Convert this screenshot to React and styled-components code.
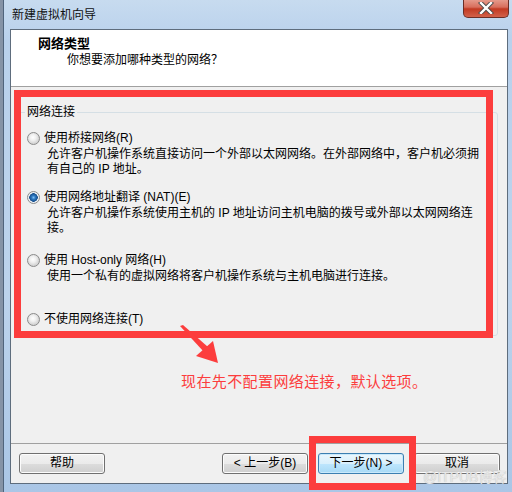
import React from 'react'
import styled, { createGlobalStyle } from 'styled-components'

const GlobalStyle = createGlobalStyle`
  html, body {
    margin: 0;
    padding: 0;
  }
  body {
    font-family: "Liberation Sans", "Noto Sans CJK SC", sans-serif;
    font-size: 12px;
    color: #000;
  }
`

const Page = styled.div`
  width: 512px;
  height: 492px;
  overflow: hidden;
  background: #8593a6;
  display: flex;
`

const Window = styled.div`
  margin-left: 3px;
  width: 515px;
  height: 492px;
  flex-shrink: 0;
  box-sizing: border-box;
  border-left: 1px solid #50647c;
  padding: 0 0 0 6px;
  background: linear-gradient(180deg, #c7dbef 0%, #b9d1ec 8%, #bcd3ec 60%, #aac6e6 100%);
  display: flex;
  flex-direction: column;
`

const TitleBar = styled.div`
  height: 29px;
  display: flex;
  align-items: flex-start;
  position: relative;
`

const TitleText = styled.div`
  margin-top: 7px;
  margin-left: 2px;
  font-size: 12px;
  line-height: 16px;
  color: #111;
`

const CloseButton = styled.div`
  position: absolute;
  left: 453px;
  top: -1px;
  width: 46px;
  height: 19px;
  box-sizing: border-box;
  border: 1px solid #6b2e26;
  border-top: none;
  border-radius: 0 0 5px 5px;
  background: linear-gradient(180deg, #e7a091 0%, #d86f5d 45%, #c23a22 55%, #d2614a 100%);
  display: flex;
  align-items: center;
  justify-content: center;
`

const Client = styled.div`
  width: 498px;
  height: 455px;
  box-sizing: border-box;
  border: 1px solid #5e6d7d;
  background: #f0f0f0;
  display: flex;
  flex-direction: column;
`

const Header = styled.div`
  background: #fff;
  border-bottom: 1px solid #a0a0a0;
  padding: 6px 0 0 27px;
  height: 50px;
`

const HeaderTitle = styled.div`
  font-weight: bold;
  font-size: 13px;
  line-height: 16px;
`

const HeaderSub = styled.div`
  margin-left: 29px;
  font-size: 12px;
  line-height: 16px;
`

const Body = styled.div`
  position: relative;
  height: 356px;
  border-bottom: 1px solid #a0a0a0;
`

const GroupBox = styled.fieldset`
  margin: 17px 9px 0 7px;
  padding: 0 0 8px 8px;
  border: 1px solid #d5dfe5;
  border-radius: 3px;
  min-width: 0;
`

const Legend = styled.legend`
  margin-left: -2px;
  padding: 0 2px;
  font-size: 12px;
  line-height: 16px;
`

const Option = styled.div`
  margin-top: ${p => p.$gap}px;
`

const RadioRow = styled.div`
  display: flex;
  align-items: center;
  height: 16px;
  gap: 4px;
  line-height: 16px;
`

const Radio = styled.span`
  width: 13px;
  height: 13px;
  box-sizing: border-box;
  border-radius: 50%;
  border: 1px solid #8b8b8b;
  background: ${p => p.$checked
    ? 'radial-gradient(circle, #7cc0f4 0px, #2b74bd 2px, #174f8c 4px, #e9eef3 4.5px, #f6f6f6 100%)'
    : 'radial-gradient(circle at 45% 40%, #ffffff 0px, #f0f0f0 3px, #d5d5d5 6px)'};
  flex-shrink: 0;
`

const Desc = styled.div`
  margin: 1px 0 0 20px;
  font-size: 12px;
  line-height: 14px;
`

const Note = styled.div`
  margin: 36px 0 0 170px;
  color: #fc3d3d;
  font-size: 15px;
  line-height: 20px;
  letter-spacing: 0.4px;
`

const Highlight = styled.div`
  position: absolute;
  left: ${p => p.$left}px;
  top: ${p => p.$top}px;
  width: ${p => p.$width}px;
  height: ${p => p.$height}px;
  box-sizing: border-box;
  border: 7px solid #fc3d3d;
  pointer-events: none;
`

const ArrowSvg = styled.svg`
  position: absolute;
  left: 166px;
  top: 238px;
`

const Footer = styled.div`
  position: relative;
  flex: 1;
  display: flex;
  align-items: flex-start;
  padding: 9px 7px 0 8px;
  gap: 10px;
`

const Spacer = styled.div`
  flex: 1;
`

const Button = styled.button`
  width: 86px;
  height: 21px;
  padding: 0;
  box-sizing: border-box;
  border: 1px solid ${p => (p.$primary ? '#3c7fb1' : '#707070')};
  border-radius: 3px;
  font-family: "Liberation Sans", "Noto Sans CJK SC", sans-serif;
  font-size: 12px;
  line-height: 19px;
  color: #000;
  background: ${p => p.$primary
    ? 'linear-gradient(180deg, #eaf6fd 0%, #d9f0fc 50%, #bee6fd 51%, #a7d9f5 100%)'
    : 'linear-gradient(180deg, #f2f2f2 0%, #ebebeb 50%, #dddddd 51%, #cfcfcf 100%)'};
  box-shadow: inset 0 0 0 1px ${p => (p.$primary ? '#c9e9fb' : '#fcfcfc')};
`

const Watermark = styled.div`
  position: absolute;
  left: 412px;
  top: 25px;
  font-size: 14px;
  line-height: 16px;
  color: #e8e8e8;
  text-shadow: 0 0 1px #b0b0b0;
  white-space: nowrap;
`

const options = [
  {
    gap: 10,
    label: '使用桥接网络(R)',
    desc: ['允许客户机操作系统直接访问一个外部以太网网络。在外部网络中，客户机必须拥', '有自己的 IP 地址。'],
  },
  {
    gap: 13,
    checked: true,
    label: '使用网络地址翻译 (NAT)(E)',
    desc: ['允许客户机操作系统使用主机的 IP 地址访问主机电脑的拨号或外部以太网网络连', '接。'],
  },
  {
    gap: 17,
    label: '使用 Host-only 网络(H)',
    desc: ['使用一个私有的虚拟网络将客户机操作系统与主机电脑进行连接。'],
  },
  {
    gap: 28,
    label: '不使用网络连接(T)',
    desc: [],
  },
]

const App = () => {
  return (
    <Page>
      <GlobalStyle />
      <Window>
        <TitleBar>
          <TitleText>新建虚拟机向导</TitleText>
          <CloseButton>
            <svg width="16" height="12" viewBox="0 0 16 12">
              <path d="M3 1 L13 11 M13 1 L3 11" stroke="#4a4a4a" strokeWidth="4.2" strokeLinecap="square" />
              <path d="M3 1 L13 11 M13 1 L3 11" stroke="#fff" strokeWidth="2.4" strokeLinecap="square" />
            </svg>
          </CloseButton>
        </TitleBar>
        <Client>
          <Header>
            <HeaderTitle>网络类型</HeaderTitle>
            <HeaderSub>你想要添加哪种类型的网络？</HeaderSub>
          </Header>
          <Body>
            <GroupBox>
              <Legend>网络连接</Legend>
              {options.map(opt => (
                <Option key={opt.label} $gap={opt.gap}>
                  <RadioRow>
                    <Radio $checked={opt.checked} />
                    <span>{opt.label}</span>
                  </RadioRow>
                  {opt.desc.map(line => (
                    <Desc key={line}>{line}</Desc>
                  ))}
                </Option>
              ))}
            </GroupBox>
            <Note>现在先不配置网络连接，默认选项。</Note>
            <Highlight $left={3} $top={3} $width={479} $height={248} />
            <ArrowSvg width="60" height="45" viewBox="0 0 60 45">
              <polygon points="3,1 6,0 31,22 27,27" fill="#fc3d3d" />
              <polygon points="19,31 36,16 41,38" fill="#fc3d3d" />
            </ArrowSvg>
          </Body>
          <Footer>
            <Button>帮助</Button>
            <Spacer />
            <Button>&lt; 上一步(B)</Button>
            <Button $primary>下一步(N) &gt;</Button>
            <Button>取消</Button>
            <Highlight $left={298} $top={-8} $width={107} $height={54} />
            <Watermark>@ITPUB博客</Watermark>
          </Footer>
        </Client>
      </Window>
    </Page>
  )
}

export default App
